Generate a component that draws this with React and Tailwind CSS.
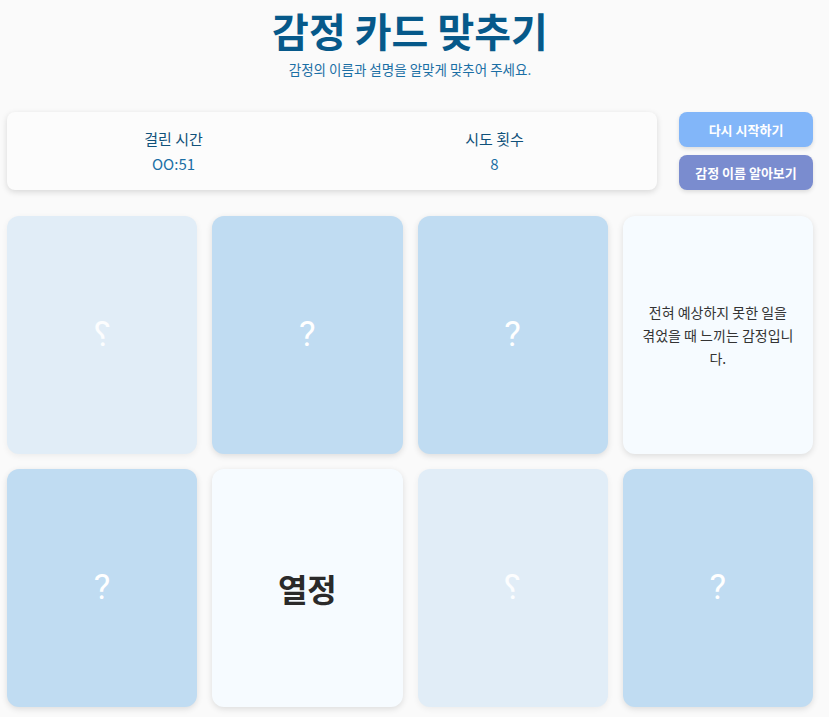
import React from "react";

const cards = [
  { id: 1, state: "flipping" },
  { id: 2, state: "hidden" },
  { id: 3, state: "hidden" },
  { id: 4, state: "desc", lines: ["전혀 예상하지 못한 일을", "겪었을 때 느끼는 감정입니", "다."] },
  { id: 5, state: "hidden" },
  { id: 6, state: "name", text: "열정" },
  { id: 7, state: "flipping" },
  { id: 8, state: "hidden" },
];

const Card = ({ card }) => {
  if (card.state === "desc") {
    return (
      <div className="h-[238px] rounded-xl bg-[#f6fbff] shadow-[0_2px_6px_rgba(0,0,0,0.12)] flex items-center justify-center px-3">
        <p className="text-center text-[14px] leading-[23px] text-[#333] whitespace-nowrap">
          {card.lines.map((line, i) => (
            <span key={i} className="block">
              {line}
            </span>
          ))}
        </p>
      </div>
    );
  }
  if (card.state === "name") {
    return (
      <div className="h-[238px] rounded-xl bg-[#f6fbff] shadow-[0_2px_6px_rgba(0,0,0,0.12)] flex items-center justify-center">
        <p className="text-[32px] font-bold text-[#2a2a2a]">{card.text}</p>
      </div>
    );
  }
  if (card.state === "flipping") {
    return (
      <div className="h-[238px] rounded-xl bg-[#e1edf7] shadow-[0_2px_6px_rgba(0,0,0,0.06)] flex items-center justify-center">
        <span className="text-[35px] text-white/90 -scale-x-100 font-['Roboto',sans-serif]">?</span>
      </div>
    );
  }
  return (
    <div className="h-[238px] rounded-xl bg-[#c0dcf2] shadow-[0_2px_6px_rgba(0,0,0,0.12)] flex items-center justify-center">
      <span className="text-[35px] text-white font-['Roboto',sans-serif]">?</span>
    </div>
  );
};

export default function App() {
  return (
    <div className="min-h-[717px] bg-[#fafafa] font-['Noto_Sans_CJK_KR',sans-serif]">
      <div className="w-[806px] ml-[7px] pb-[10px]">
        <header className="flex flex-col items-center pt-[2px]">
          <h1 className="text-[40px] leading-[56px] font-bold text-[#06598a]">감정 카드 맞추기</h1>
          <p className="mt-[2px] text-[13.5px] leading-[18px] text-[#1a6fa5]">
            감정의 이름과 설명을 알맞게 맞추어 주세요.
          </p>
        </header>

        <section className="mt-[34px] flex gap-[22px]">
          <div className="w-[650px] h-[78px] rounded-lg bg-[#fcfcfc] shadow-[0_2px_6px_rgba(0,0,0,0.14)] grid grid-cols-2 items-center">
            <div className="flex flex-col items-center pl-[8px]">
              <span className="text-[15px] leading-[22px] text-[#10517a]">걸린 시간</span>
              <span className="mt-[3px] text-[15px] leading-[22px] text-[#1a6fa5]">OO:51</span>
            </div>
            <div className="flex flex-col items-center">
              <span className="text-[15px] leading-[22px] text-[#10517a]">시도 횟수</span>
              <span className="mt-[3px] text-[15px] leading-[22px] text-[#1a6fa5]">8</span>
            </div>
          </div>
          <div className="w-[134px] flex flex-col gap-[8px]">
            <button
              type="button"
              className="h-[35px] rounded-lg bg-[#82b6f9] text-white text-[13px] font-bold shadow-[0_2px_4px_rgba(0,0,0,0.12)]"
            >
              다시 시작하기
            </button>
            <button
              type="button"
              className="h-[35px] rounded-lg bg-[#7a8ccf] text-white text-[13px] font-bold shadow-[0_2px_4px_rgba(0,0,0,0.12)]"
            >
              감정 이름 알아보기
            </button>
          </div>
        </section>

        <section className="mt-[26px] grid grid-cols-4 gap-x-[15px] gap-y-[15px]">
          {cards.map((card) => (
            <Card key={card.id} card={card} />
          ))}
        </section>
      </div>
    </div>
  );
}
